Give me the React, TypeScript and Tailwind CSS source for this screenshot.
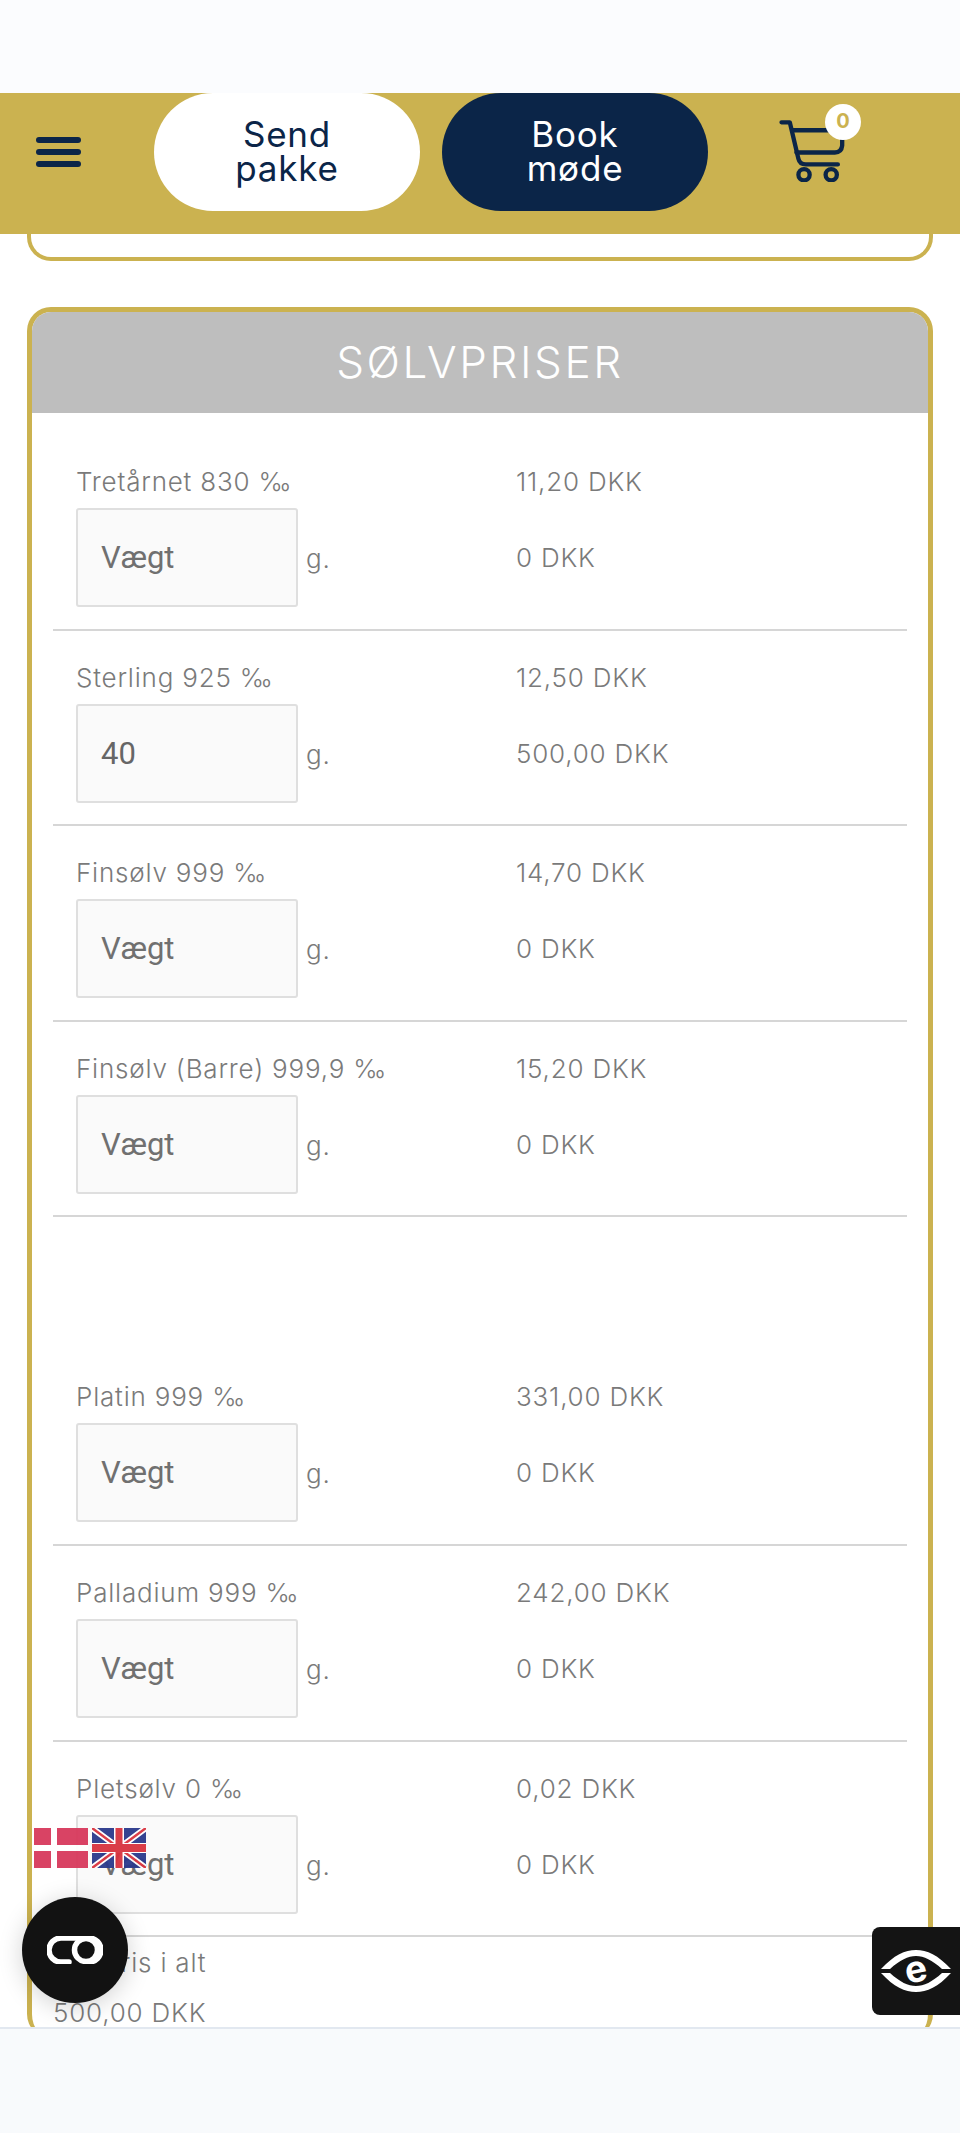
const silver = [
  { name: "Tretårnet 830 ‰", price: "11,20 DKK", weight: "", total: "0 DKK" },
  { name: "Sterling 925 ‰", price: "12,50 DKK", weight: "40", total: "500,00 DKK" },
  { name: "Finsølv 999 ‰", price: "14,70 DKK", weight: "", total: "0 DKK" },
  { name: "Finsølv (Barre) 999,9 ‰", price: "15,20 DKK", weight: "", total: "0 DKK" },
];

const other = [
  { name: "Platin 999 ‰", price: "331,00 DKK", weight: "", total: "0 DKK" },
  { name: "Palladium 999 ‰", price: "242,00 DKK", weight: "", total: "0 DKK" },
  { name: "Pletsølv 0 ‰", price: "0,02 DKK", weight: "", total: "0 DKK" },
];

type Metal = (typeof silver)[number];

const PriceRow = ({ metal }: { metal: Metal }) => (
  <div className="h-[195.6px] border-b-2 border-[#d6d6d6] pt-[27px] pl-[23px] grid grid-cols-[440px_1fr] text-[26px] leading-[39px] font-light text-[#7a7a7a] tracking-[0.8px]">
    <div>
      <div>{metal.name}</div>
      <div className="mt-[7px] flex items-center">
        <input
          readOnly
          value={metal.weight}
          placeholder="Vægt"
          className="w-[222px] h-[99px] rounded-[3px] border-2 border-[#dfdfdf] bg-[#fafafa] px-[23px] font-['Roboto',sans-serif] text-[31px] font-normal tracking-normal text-[#666] placeholder:text-[#707070] outline-none"
        />
        <span className="ml-[8px] pt-[2px]">g.</span>
      </div>
    </div>
    <div>
      <div>{metal.price}</div>
      <div className="mt-[37px]">{metal.total}</div>
    </div>
  </div>
);

const DanishFlag = () => (
  <svg width="54" height="40" viewBox="0 0 54 40" className="block">
    <rect width="54" height="40" fill="#d8395c" />
    <rect x="17" width="6" height="40" fill="#fff" />
    <rect y="17" width="54" height="6" fill="#fff" />
  </svg>
);

const UkFlag = () => (
  <svg width="54" height="40" viewBox="0 0 54 40" className="block">
    <rect width="54" height="40" fill="#2b3a8c" />
    <path d="M0 0 54 40M54 0 0 40" stroke="#fff" strokeWidth="6" />
    <path d="M0 0 54 40M54 0 0 40" stroke="#d9333f" strokeWidth="2.5" />
    <rect x="22" width="10" height="40" fill="#fff" />
    <rect y="15" width="54" height="10" fill="#fff" />
    <rect x="23.5" width="7" height="40" fill="#d9333f" />
    <rect y="16" width="54" height="8" fill="#d9333f" />
  </svg>
);

export default function App() {
  return (
    <div className="relative h-[2133px] w-[960px] overflow-hidden bg-white flex flex-col font-['Inter',sans-serif]">
      <div className="h-[93px] shrink-0 bg-[#fbfcfe]" />

      {/* Header */}
      <header className="h-[141px] shrink-0 bg-[#cbb250]">
        <div className="h-[118px] flex items-center pl-[36px]">
          <div className="w-[45px] flex flex-col gap-[6.5px]">
            <span className="h-[5.5px] rounded-full bg-[#0b2548]" />
            <span className="h-[5.5px] rounded-full bg-[#0b2548]" />
            <span className="h-[5.5px] rounded-full bg-[#0b2548]" />
          </div>
          <button className="ml-[73px] w-[266px] h-[118px] pb-[2px] rounded-[59px] bg-white text-[#0b2548] text-[35px] leading-[34px] font-normal tracking-[0.8px]">
            Send
            <br />
            pakke
          </button>
          <button className="ml-[22px] w-[266px] h-[118px] pb-[2px] rounded-[59px] bg-[#0b2548] text-white text-[35px] leading-[34px] font-normal tracking-[0.8px]">
            Book
            <br />
            møde
          </button>
          <div className="relative ml-[70px] mb-[4px] w-[70px] h-[63px]">
            <svg width="70" height="63" viewBox="115 85 210 190" fill="none" stroke="#0b2548" strokeWidth="13" strokeLinecap="round" strokeLinejoin="round">
              <path d="M125 95h25l26 110q4 17 22 17h97" />
              <path d="M160 119h140" />
              <path d="M308 140v25q-2 21-22 21H170" />
              <circle cx="193" cy="253" r="17" />
              <circle cx="275" cy="253" r="17" />
            </svg>
            <span className="absolute left-[47px] top-[-15px] w-[36px] h-[36px] rounded-full bg-white text-[#cbb250] text-[20px] font-bold leading-[34px] text-center">
              0
            </span>
          </div>
        </div>
      </header>

      <main className="flex-1 min-h-0 overflow-hidden px-[27px]">
        {/* Remainder of the card above */}
        <div className="h-[27px] rounded-b-[24px] border-x-4 border-b-4 border-[#cbb250]" />

        <section className="mt-[46px] rounded-[24px] border-x-[5px] border-t-[5px] border-[#cbb250] overflow-hidden">
          <h2 className="h-[101px] bg-[#bebebe] text-white text-[44px] font-light text-center leading-[101px] tracking-[2.6px]">
            SØLVPRISER
          </h2>
          <div className="px-[21px] pt-[22px]">
            {silver.map((m) => (
              <PriceRow key={m.name} metal={m} />
            ))}
            <div className="h-[133px]" />
            {other.map((m) => (
              <PriceRow key={m.name} metal={m} />
            ))}
            <div className="w-fit flex flex-col items-end pt-[1px] text-[26px] leading-[50px] font-light text-[#7a7a7a] tracking-[0.8px]">
              <div>Pris i alt</div>
              <div>500,00 DKK</div>
            </div>
          </div>
        </section>
      </main>

      <div className="h-[106px] shrink-0 bg-[#f8fafc] border-t-2 border-[#e2e8f0]" />

      {/* Floating widgets */}
      <div className="absolute left-[34px] top-[1828px] flex gap-[4px] opacity-95">
        <DanishFlag />
        <UkFlag />
      </div>

      <div className="absolute left-[22px] top-[1897px] w-[106px] h-[106px] rounded-full bg-[#121212] shadow-[0_4px_24px_rgba(0,0,0,0.18)] flex items-center justify-center">
        <svg width="56" height="28" viewBox="0 0 56 28" fill="none" stroke="#fff" strokeWidth="5.5" strokeLinecap="round">
          <path d="M22 26H14a12 12 0 0 1 0-24h28a12 12 0 0 1 0 24" />
          <circle cx="39" cy="14" r="11.5" />
        </svg>
      </div>

      <div className="absolute right-0 top-[1927px] w-[88px] h-[88px] rounded-l-[8px] bg-[#141414] flex items-center justify-center">
        <svg width="72" height="44" viewBox="0 0 72 44">
          <path d="M1 20C14 6 25 1 36 1s22 5 35 19l-9 0C52 11 44 7 36 7S20 11 10 20Z" fill="#fff" />
          <path d="M1 24c13 14 24 19 35 19s22-5 35-19l-9 0C52 33 44 37 36 37S20 33 10 24Z" fill="#fff" />
          <text x="36" y="33" textAnchor="middle" fill="#fff" fontSize="37" fontWeight="700" fontFamily="Inter, sans-serif" transform="rotate(-12 36 22)">
            e
          </text>
        </svg>
      </div>
    </div>
  );
}
